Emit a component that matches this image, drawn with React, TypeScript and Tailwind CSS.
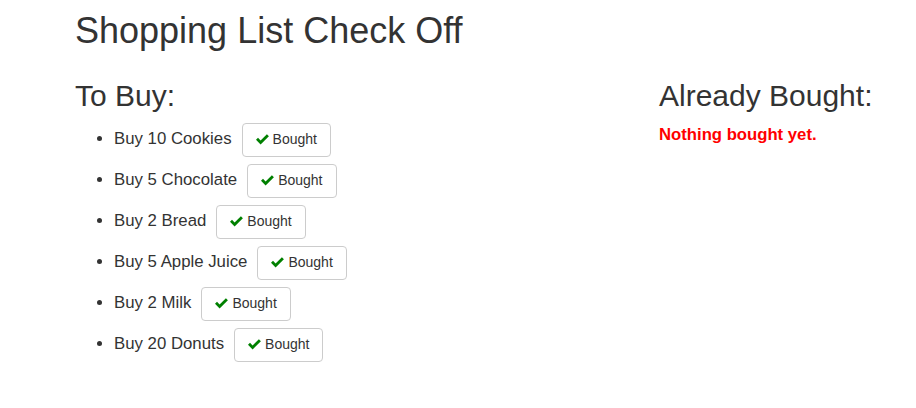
import React from 'react';

const items = [
  'Buy 10 Cookies',
  'Buy 5 Chocolate',
  'Buy 2 Bread',
  'Buy 5 Apple Juice',
  'Buy 2 Milk',
  'Buy 20 Donuts',
];

const Check = () => (
  <svg width="13" height="11" viewBox="0 0 13 11" className="mr-[4px] -mt-[1px]">
    <path d="M0 5.8 L2 3.8 L4.6 6.4 L10.9 0.2 L12.9 2.2 L4.6 10.4 Z" fill="#008000" />
  </svg>
);

const App = () => {
  return (
    <div className="min-h-screen bg-white text-[#333] font-['Liberation_Sans',Arial,sans-serif]">
      <div className="pl-[75px]">
        <h1 className="pt-[11px] text-[36px] leading-[1.1]">Shopping List Check Off</h1>
        <div className="flex">
          <div className="w-[584px] shrink-0">
            <h2 className="mt-[28px] text-[30px] leading-[1.1]">To Buy:</h2>
            <ul className="mt-[11px] list-disc pl-[39px]">
              {items.map((item) => (
                <li key={item} className="mb-[7px] text-[16.8px]">
                  {item}
                  <button className="ml-[10px] inline-flex h-[34px] items-center rounded border border-[#ccc] bg-white pl-[13px] pr-[13px] align-middle text-[14px] text-[#333]">
                    <Check />
                    Bought
                  </button>
                </li>
              ))}
            </ul>
          </div>
          <div className="whitespace-nowrap">
            <h2 className="mt-[28px] text-[30px] leading-[1.1]">Already Bought:</h2>
            <div className="mt-[10px] text-[16.7px] font-bold text-[#f00]">Nothing bought yet.</div>
          </div>
        </div>
      </div>
    </div>
  );
};

export default App;
